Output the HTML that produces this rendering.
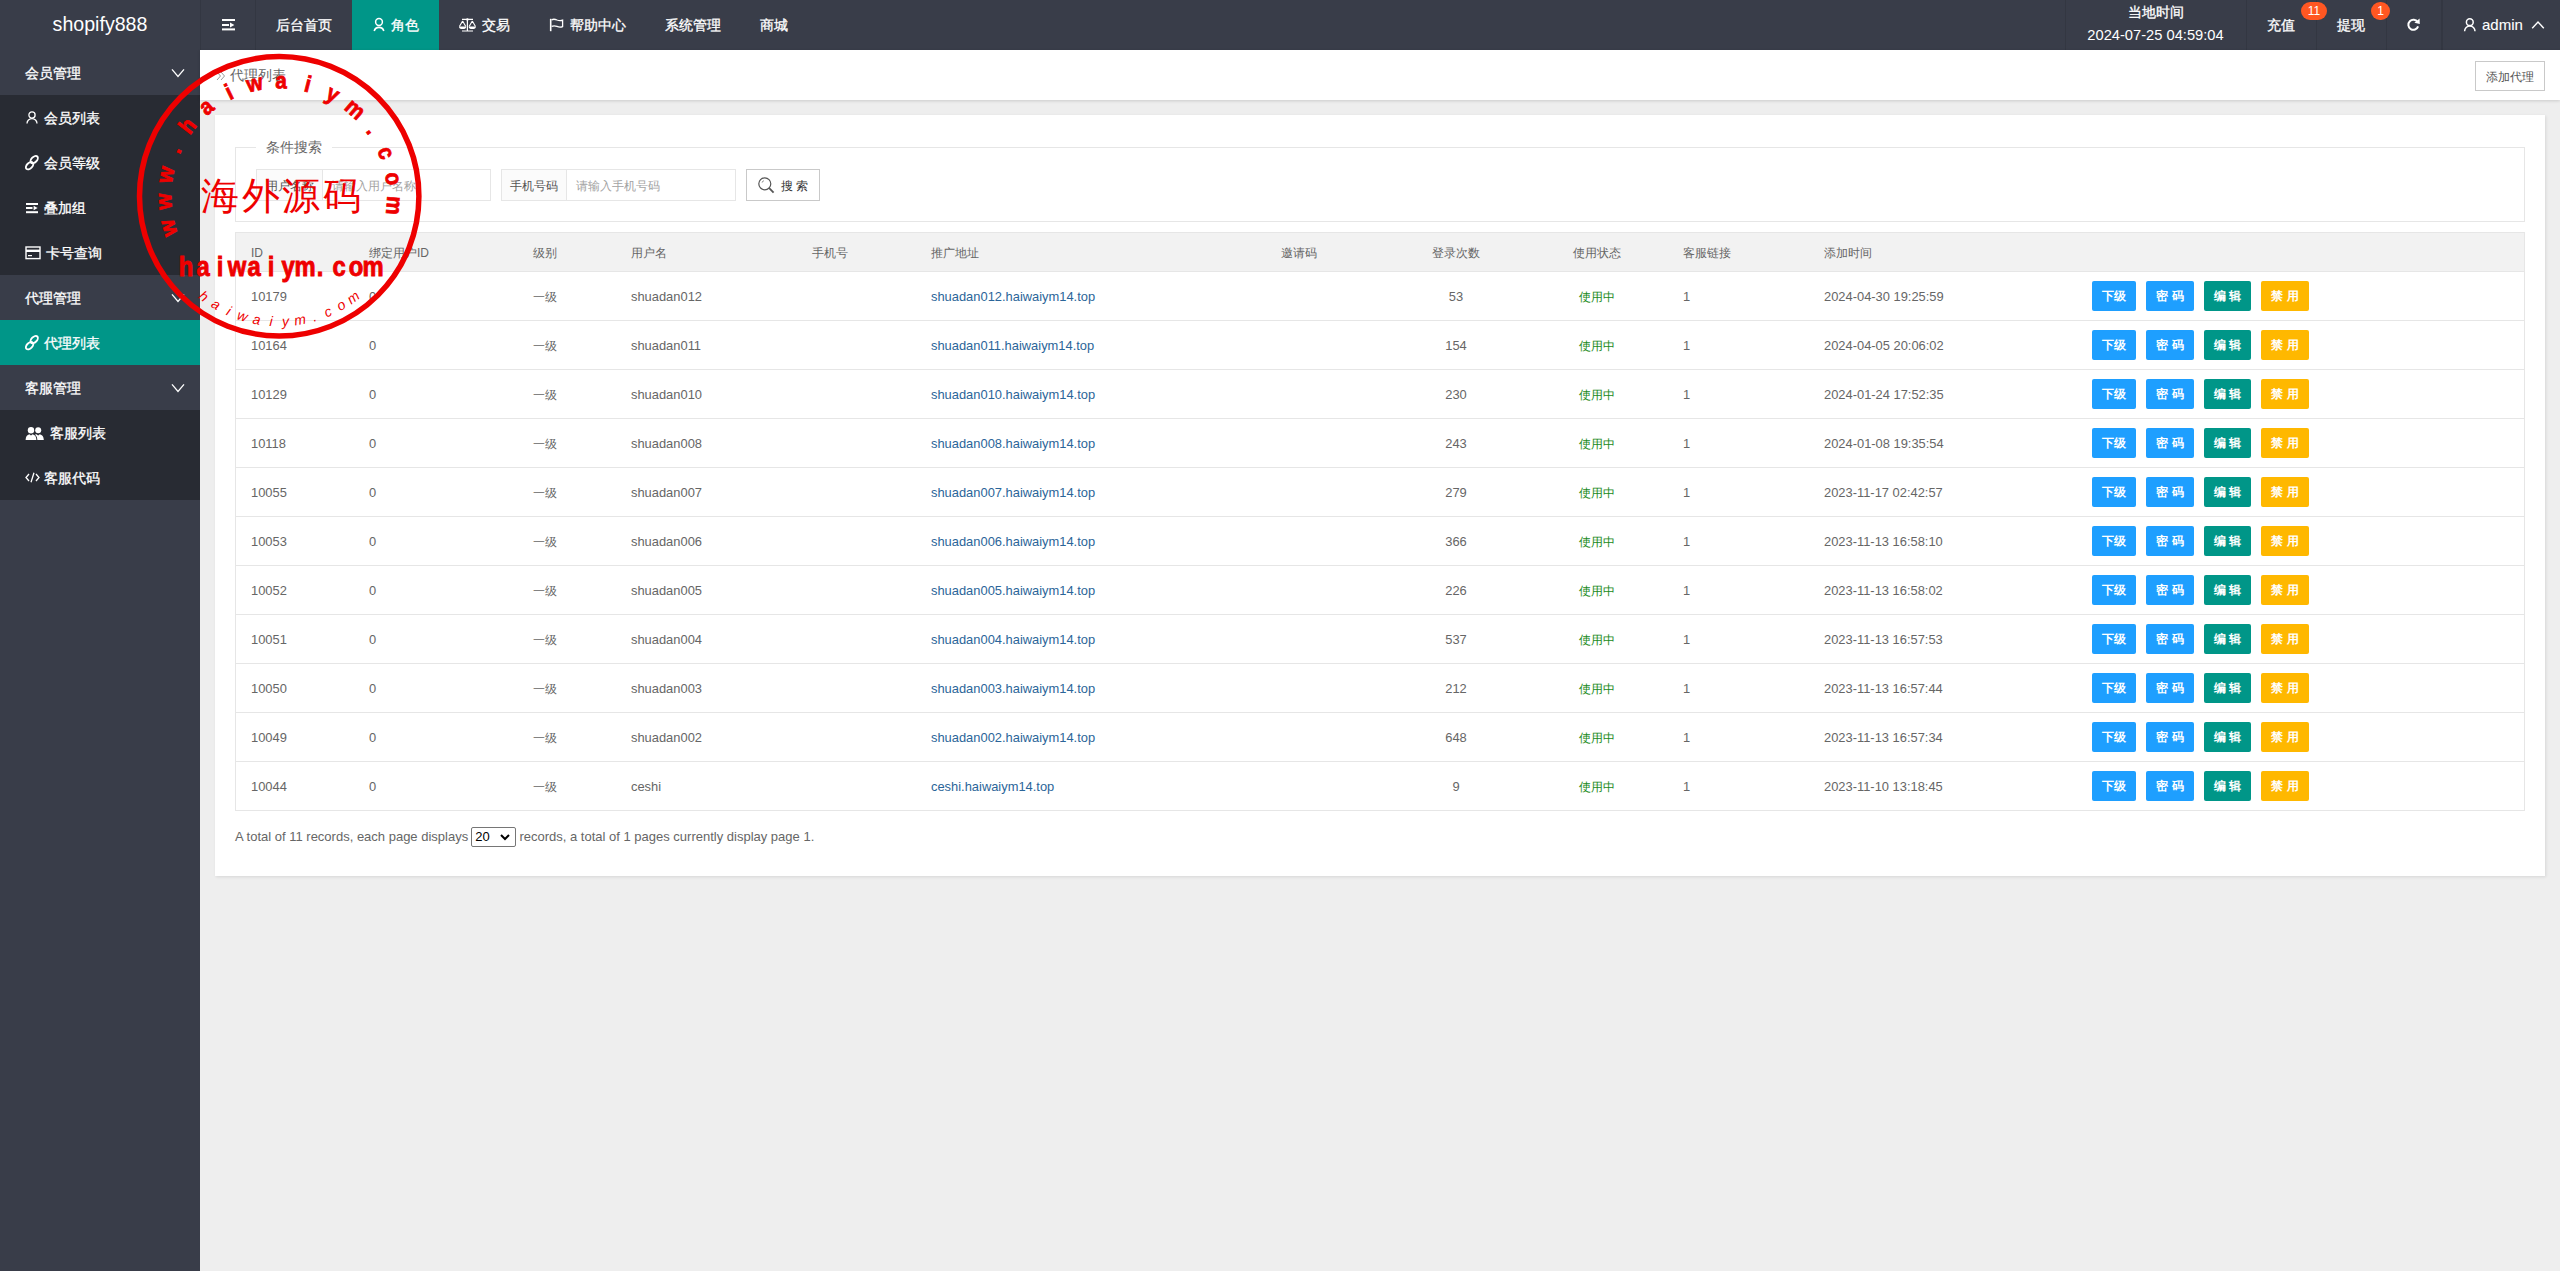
<!DOCTYPE html>
<html><head><meta charset="utf-8">
<style>
*{margin:0;padding:0;box-sizing:border-box}
html,body{width:2560px;height:1271px;overflow:hidden}
body{font-family:"Liberation Sans",sans-serif;background:#eeeeee;position:relative;color:#666}
.abs{position:absolute;white-space:nowrap}
#hdr{position:absolute;left:0;top:0;width:2560px;height:50px;background:#393D49}
#logo{position:absolute;left:0;top:0;width:200px;height:50px;line-height:48px;text-align:center;color:#fff;font-size:19.6px}
.nv{position:absolute;top:0;height:50px;line-height:50px;color:#fff;font-size:14px;white-space:nowrap;-webkit-text-stroke:0.3px #fff}
.sep{position:absolute;top:0;width:1px;height:50px;background:#333742}
.ic{position:absolute;overflow:visible}
#side{position:absolute;left:0;top:50px;width:200px;height:1221px;background:#393D49}
.si{position:absolute;left:0;width:200px;height:45px;line-height:47px;color:#fff;font-size:14px;white-space:nowrap;-webkit-text-stroke:0.3px #fff}
.si.g{background:#393D49}
.si.c{background:#282B33}
.si.a{background:#009688}
.si svg{position:absolute}
#crumb{position:absolute;left:200px;top:50px;width:2360px;height:50px;background:#fff;box-shadow:0 1px 3px rgba(0,0,0,.15)}
#card{position:absolute;left:215px;top:115px;width:2330px;height:761px;background:#fff;box-shadow:1px 1px 3px rgba(0,0,0,.10)}
.fs{position:absolute;left:235px;top:147px;width:2290px;height:75px;border:1px solid #e6e6e6}
.legend{position:absolute;left:256px;top:138px;height:18px;padding:0 10px;background:#fff;font-size:14px;line-height:18px;color:#666}
.lbl{position:absolute;top:169px;height:32px;line-height:32px;border:1px solid #e6e6e6;background:#FBFBFB;font-size:12px;color:#555;text-align:center}
.inp{position:absolute;top:169px;height:32px;line-height:32px;border:1px solid #e6e6e6;background:#fff;font-size:12px;color:#a3a3a3;padding-left:9px}
.sbtn{position:absolute;top:169px;left:746px;width:74px;height:32px;border:1px solid #C9C9C9;background:#fff;font-size:12px;color:#333;line-height:30px}
.thd{position:absolute;left:235px;top:232px;width:2290px;height:40px;background:#f2f2f2;border:1px solid #e6e6e6;border-bottom:1px solid #e6e6e6}
.th{position:absolute;top:244px;font-size:12px;line-height:18px;color:#666;white-space:nowrap}
.tbody{position:absolute;left:235px;top:271px;width:2290px;height:540px;border:1px solid #e6e6e6;border-top:none}
.tr{position:absolute;left:0;width:2560px;height:49px}
.tr::after{content:"";position:absolute;left:236px;top:48px;width:2288px;height:1px;background:#e6e6e6}
.td{position:absolute;top:16px;line-height:18px;white-space:nowrap;color:#666}
.lt{font-size:12.9px}
.cj{font-size:12px}
.lk{color:#2b6599}
.ct{width:100px;text-align:center}
.st{width:100px;text-align:center;color:#1a8a1a}
.bt{position:absolute;top:9px;height:30px;line-height:30px;border-radius:2px;color:#fff;font-size:12px;font-weight:bold;text-align:center;white-space:nowrap}
.b1{background:#1E9FFF}.b2{background:#009688}.b3{background:#FFB800}
.foot{position:absolute;left:235px;top:829px;font-size:13px;line-height:16px;color:#666;white-space:nowrap}
.sel{display:inline-block;vertical-align:top;position:relative;top:-2px;width:45px;height:20px;border:1px solid #767676;border-radius:2px;color:#000;font-size:13px;line-height:18px;padding-left:3px;margin:0 -0.5px}
.badge{position:absolute;z-index:2;top:2px;height:18px;line-height:18px;border-radius:9px;background:#FF5722;color:#fff;font-size:12px;text-align:center}
</style></head><body>
<div id="hdr">
  <div id="logo">shopify888</div>
  <div class="sep" style="left:200px"></div>
  <div class="sep" style="left:255px"></div>
  <svg class="ic" style="left:221px;top:18px" width="15" height="14" viewBox="0 0 15 14">
    <rect x="1" y="1" width="13" height="2" fill="#fff"/>
    <rect x="1" y="6" width="7" height="2" fill="#fff"/>
    <path d="M9 4.6 L13.4 7 L9 9.4 Z" fill="#fff"/>
    <rect x="1" y="10.4" width="13" height="2" fill="#fff"/>
  </svg>
  <div class="nv" style="left:276px">后台首页</div>
  <div class="nv" style="left:352px;width:87px;background:#009688"></div>
  <svg class="ic" style="left:372px;top:16px" width="14" height="16" viewBox="0 0 14 16">
    <circle cx="7" cy="6" r="3.4" fill="none" stroke="#fff" stroke-width="1.5"/>
    <path d="M2.2 15 A5 5 0 0 1 11.8 15" fill="none" stroke="#fff" stroke-width="1.6"/>
  </svg>
  <div class="nv" style="left:391px">角色</div>
  <svg class="ic" style="left:458px;top:18px" width="19" height="14" viewBox="0 0 19 14">
    <path d="M4 1.4 H15 M9.4 1.4 V13 M4 13 H15" stroke="#fff" stroke-width="1.2" fill="none"/>
    <circle cx="9.4" cy="1.4" r="1.2" fill="#fff"/>
    <path d="M4.6 3 L1.4 8.6 M4.6 3 L7.8 8.6 M14.3 3 L11.1 8.6 M14.3 3 L17.5 8.6" stroke="#fff" stroke-width="1.1" fill="none"/>
    <path d="M1 8.4 H8.2 A3.6 2.7 0 0 1 1 8.4 Z M10.7 8.4 H17.9 A3.6 2.7 0 0 1 10.7 8.4 Z" fill="#fff"/>
  </svg>
  <div class="nv" style="left:482px">交易</div>
  <svg class="ic" style="left:549px;top:18px" width="16" height="14" viewBox="0 0 16 14">
    <path d="M1.7 0.8 V13.2" stroke="#fff" stroke-width="1.6"/>
    <path d="M2.6 1.8 Q5 0.6 8 2 Q11 3.2 13.6 2.2 V8.6 Q11 9.6 8 8.4 Q5 7.2 2.6 8.4" fill="none" stroke="#fff" stroke-width="1.3"/>
  </svg>
  <div class="nv" style="left:570px">帮助中心</div>
  <div class="nv" style="left:665px">系统管理</div>
  <div class="nv" style="left:760px">商城</div>

  <div class="sep" style="left:2065px"></div>
  <div class="nv" style="left:2065px;width:181px;text-align:center;line-height:18px;top:3px;font-size:14px">当地时间</div>
  <div class="nv" style="left:2065px;width:181px;text-align:center;line-height:18px;top:26px;font-size:14.7px;-webkit-text-stroke:0">2024-07-25 04:59:04</div>
  <div class="sep" style="left:2246px"></div>
  <div class="nv" style="left:2267px">充值</div>
  <div class="badge" style="left:2301px;width:26px">11</div>
  <div class="sep" style="left:2316px"></div>
  <div class="nv" style="left:2337px">提现</div>
  <div class="badge" style="left:2371px;width:19px">1</div>
  <div class="sep" style="left:2386px"></div>
  <svg class="ic" style="left:2406px;top:18px" width="15" height="14" viewBox="0 0 15 14">
    <path d="M11.6 4.2 A5 5 0 1 0 12.1 8.4" fill="none" stroke="#fff" stroke-width="2"/>
    <path d="M8.4 4.8 L13.6 0.6 L13.8 6 Z" fill="#fff"/>
  </svg>
  <div class="sep" style="left:2441px;width:2px"></div>
  <svg class="ic" style="left:2463px;top:17px" width="14" height="15" viewBox="0 0 14 15">
    <circle cx="6.8" cy="5.2" r="3.4" fill="none" stroke="#fff" stroke-width="1.5"/>
    <path d="M1.6 14.2 A5.2 5.2 0 0 1 12 14.2" fill="none" stroke="#fff" stroke-width="1.5"/>
  </svg>
  <div class="nv" style="left:2482px;font-size:15px;-webkit-text-stroke:0.1px #fff">admin</div>
  <svg class="ic" style="left:2531px;top:20px" width="14" height="10" viewBox="0 0 14 10">
    <path d="M1.2 8.2 L7 2 L12.8 8.2" fill="none" stroke="#fff" stroke-width="1.4"/>
  </svg>
</div>

<div id="side">
  <div class="si g" style="top:0;padding-left:25px">会员管理
    <svg style="left:171px;top:18px" width="14" height="10" viewBox="0 0 14 10"><path d="M1 1.4 L7 8.4 L13 1.4" fill="none" stroke="#fff" stroke-width="1.3"/></svg></div>
  <div class="si c" style="top:45px;padding-left:44px">会员列表
    <svg style="left:26px;top:16px" width="12" height="13" viewBox="0 0 12 13"><circle cx="6" cy="4" r="3.1" fill="none" stroke="#fff" stroke-width="1.3"/><path d="M1 12.6 A5 5 0 0 1 11 12.6" fill="none" stroke="#fff" stroke-width="1.3"/></svg></div>
  <div class="si c" style="top:90px;padding-left:44px">会员等级
    <svg style="left:25px;top:14px" width="16" height="18" viewBox="0 0 16 18"><g fill="none" stroke="#fff" stroke-width="1.9"><ellipse cx="9.2" cy="5.6" rx="4.4" ry="2.7" transform="rotate(-45 9.2 5.6)"/><ellipse cx="4.6" cy="11.7" rx="4.4" ry="2.7" transform="rotate(-45 4.6 11.7)"/></g></svg></div>
  <div class="si c" style="top:135px;padding-left:44px">叠加组
    <svg style="left:25px;top:17px" width="14" height="12" viewBox="0 0 14 12"><rect x="1" y="1" width="12" height="2" fill="#fff"/><rect x="1" y="5" width="6.5" height="2" fill="#fff"/><path d="M8.6 3.8 L12.6 6 L8.6 8.2Z" fill="#fff"/><rect x="1" y="9.2" width="12" height="2" fill="#fff"/></svg></div>
  <div class="si c" style="top:180px;padding-left:46px">卡号查询
    <svg style="left:25px;top:16px" width="16" height="14" viewBox="0 0 16 14"><rect x="1" y="1" width="14" height="11.6" fill="none" stroke="#fff" stroke-width="1.4"/><rect x="1" y="3.6" width="14" height="2.4" fill="#fff"/><rect x="3" y="9" width="4" height="1.2" fill="#fff"/></svg></div>
  <div class="si g" style="top:225px;padding-left:25px">代理管理
    <svg style="left:171px;top:18px" width="14" height="10" viewBox="0 0 14 10"><path d="M1 1.4 L7 8.4 L13 1.4" fill="none" stroke="#fff" stroke-width="1.3"/></svg></div>
  <div class="si a" style="top:270px;padding-left:44px">代理列表
    <svg style="left:25px;top:14px" width="16" height="18" viewBox="0 0 16 18"><g fill="none" stroke="#fff" stroke-width="1.9"><ellipse cx="9.2" cy="5.6" rx="4.4" ry="2.7" transform="rotate(-45 9.2 5.6)"/><ellipse cx="4.6" cy="11.7" rx="4.4" ry="2.7" transform="rotate(-45 4.6 11.7)"/></g></svg></div>
  <div class="si g" style="top:315px;padding-left:25px">客服管理
    <svg style="left:171px;top:18px" width="14" height="10" viewBox="0 0 14 10"><path d="M1 1.4 L7 8.4 L13 1.4" fill="none" stroke="#fff" stroke-width="1.3"/></svg></div>
  <div class="si c" style="top:360px;padding-left:50px">客服列表
    <svg style="left:25px;top:16px" width="20" height="15" viewBox="0 0 20 15"><g fill="#fff"><circle cx="6" cy="4.2" r="3.2"/><path d="M0.6 14 Q0.8 9 4.4 8.2 L6 9.6 L7.6 8.2 Q11.2 9 11.4 14 Z"/><circle cx="13.2" cy="4.2" r="3" /><path d="M10 8.6 L11.4 8.2 L13.2 9.6 L14.8 8.2 Q18.6 9 18.8 14 H12.4 Q12.2 10.4 10 8.6Z"/></g></svg></div>
  <div class="si c" style="top:405px;padding-left:44px">客服代码
    <svg style="left:25px;top:17px" width="15" height="11" viewBox="0 0 15 11"><path d="M4 2 L1 5.5 L4 9 M11 2 L14 5.5 L11 9 M9 0.8 L6 10.2" fill="none" stroke="#fff" stroke-width="1.3"/></svg></div>
</div>

<div id="crumb">
  <svg style="position:absolute;left:16px;top:21px" width="10" height="10" viewBox="0 0 10 10"><path d="M1 1 L4.5 5 L1 9 M5 1 L8.5 5 L5 9" fill="none" stroke="#999" stroke-width="1"/></svg>
  <div class="abs" style="left:30px;top:16px;font-size:14px;line-height:18px;color:#666">代理列表</div>
  <div class="abs" style="left:2275px;top:11px;width:70px;height:30px;border:1px solid #C9C9C9;background:#fff;font-size:12px;line-height:30px;text-align:center;color:#555">添加代理</div>
</div>

<div id="card"></div>
<div class="fs"></div>
<div class="legend">条件搜索</div>
<div class="lbl" style="left:256px;width:67px">用户名称</div>
<div class="inp" style="left:322px;width:169px">请输入用户名称</div>
<div class="lbl" style="left:501px;width:66px">手机号码</div>
<div class="inp" style="left:566px;width:170px">请输入手机号码</div>
<div class="sbtn">
  <svg style="position:absolute;left:11px;top:7px" width="17" height="17" viewBox="0 0 17 17"><circle cx="6.8" cy="6.8" r="6" fill="none" stroke="#555" stroke-width="1.2"/><path d="M11.2 11.2 L15.6 15.6" stroke="#555" stroke-width="1.8"/><path d="M4.2 5.4 A3 3 0 0 1 5.6 3.8" fill="none" stroke="#555" stroke-width="0.9"/></svg>
  <span style="position:absolute;left:34px;top:1px">搜&nbsp;索</span>
</div>

<div class="thd"></div>
<div class="tbody"></div>
<span class="th" style="left:251px">ID</span>
<span class="th" style="left:369px">绑定用户ID</span>
<span class="th" style="left:533px">级别</span>
<span class="th" style="left:631px">用户名</span>
<span class="th" style="left:812px">手机号</span>
<span class="th" style="left:931px">推广地址</span>
<span class="th" style="left:1281px">邀请码</span>
<span class="th" style="left:1432px">登录次数</span>
<span class="th" style="left:1573px">使用状态</span>
<span class="th" style="left:1683px">客服链接</span>
<span class="th" style="left:1824px">添加时间</span>
<div class="tr" style="top:272px"><span class="td lt" style="left:251px">10179</span><span class="td lt" style="left:369px">0</span><span class="td cj" style="left:533px">一级</span><span class="td lt" style="left:631px">shuadan012</span><span class="td lt lk" style="left:931px">shuadan012.haiwaiym14.top</span><span class="td lt ct" style="left:1406px">53</span><span class="td cj st" style="left:1547px">使用中</span><span class="td lt" style="left:1683px">1</span><span class="td lt" style="left:1824px">2024-04-30 19:25:59</span><span class="bt b1" style="left:2092px;width:44px">下级</span><span class="bt b1" style="left:2146px;width:48px">密&nbsp;码</span><span class="bt b2" style="left:2204px;width:47px">编&nbsp;辑</span><span class="bt b3" style="left:2261px;width:48px">禁&nbsp;用</span></div>
<div class="tr" style="top:321px"><span class="td lt" style="left:251px">10164</span><span class="td lt" style="left:369px">0</span><span class="td cj" style="left:533px">一级</span><span class="td lt" style="left:631px">shuadan011</span><span class="td lt lk" style="left:931px">shuadan011.haiwaiym14.top</span><span class="td lt ct" style="left:1406px">154</span><span class="td cj st" style="left:1547px">使用中</span><span class="td lt" style="left:1683px">1</span><span class="td lt" style="left:1824px">2024-04-05 20:06:02</span><span class="bt b1" style="left:2092px;width:44px">下级</span><span class="bt b1" style="left:2146px;width:48px">密&nbsp;码</span><span class="bt b2" style="left:2204px;width:47px">编&nbsp;辑</span><span class="bt b3" style="left:2261px;width:48px">禁&nbsp;用</span></div>
<div class="tr" style="top:370px"><span class="td lt" style="left:251px">10129</span><span class="td lt" style="left:369px">0</span><span class="td cj" style="left:533px">一级</span><span class="td lt" style="left:631px">shuadan010</span><span class="td lt lk" style="left:931px">shuadan010.haiwaiym14.top</span><span class="td lt ct" style="left:1406px">230</span><span class="td cj st" style="left:1547px">使用中</span><span class="td lt" style="left:1683px">1</span><span class="td lt" style="left:1824px">2024-01-24 17:52:35</span><span class="bt b1" style="left:2092px;width:44px">下级</span><span class="bt b1" style="left:2146px;width:48px">密&nbsp;码</span><span class="bt b2" style="left:2204px;width:47px">编&nbsp;辑</span><span class="bt b3" style="left:2261px;width:48px">禁&nbsp;用</span></div>
<div class="tr" style="top:419px"><span class="td lt" style="left:251px">10118</span><span class="td lt" style="left:369px">0</span><span class="td cj" style="left:533px">一级</span><span class="td lt" style="left:631px">shuadan008</span><span class="td lt lk" style="left:931px">shuadan008.haiwaiym14.top</span><span class="td lt ct" style="left:1406px">243</span><span class="td cj st" style="left:1547px">使用中</span><span class="td lt" style="left:1683px">1</span><span class="td lt" style="left:1824px">2024-01-08 19:35:54</span><span class="bt b1" style="left:2092px;width:44px">下级</span><span class="bt b1" style="left:2146px;width:48px">密&nbsp;码</span><span class="bt b2" style="left:2204px;width:47px">编&nbsp;辑</span><span class="bt b3" style="left:2261px;width:48px">禁&nbsp;用</span></div>
<div class="tr" style="top:468px"><span class="td lt" style="left:251px">10055</span><span class="td lt" style="left:369px">0</span><span class="td cj" style="left:533px">一级</span><span class="td lt" style="left:631px">shuadan007</span><span class="td lt lk" style="left:931px">shuadan007.haiwaiym14.top</span><span class="td lt ct" style="left:1406px">279</span><span class="td cj st" style="left:1547px">使用中</span><span class="td lt" style="left:1683px">1</span><span class="td lt" style="left:1824px">2023-11-17 02:42:57</span><span class="bt b1" style="left:2092px;width:44px">下级</span><span class="bt b1" style="left:2146px;width:48px">密&nbsp;码</span><span class="bt b2" style="left:2204px;width:47px">编&nbsp;辑</span><span class="bt b3" style="left:2261px;width:48px">禁&nbsp;用</span></div>
<div class="tr" style="top:517px"><span class="td lt" style="left:251px">10053</span><span class="td lt" style="left:369px">0</span><span class="td cj" style="left:533px">一级</span><span class="td lt" style="left:631px">shuadan006</span><span class="td lt lk" style="left:931px">shuadan006.haiwaiym14.top</span><span class="td lt ct" style="left:1406px">366</span><span class="td cj st" style="left:1547px">使用中</span><span class="td lt" style="left:1683px">1</span><span class="td lt" style="left:1824px">2023-11-13 16:58:10</span><span class="bt b1" style="left:2092px;width:44px">下级</span><span class="bt b1" style="left:2146px;width:48px">密&nbsp;码</span><span class="bt b2" style="left:2204px;width:47px">编&nbsp;辑</span><span class="bt b3" style="left:2261px;width:48px">禁&nbsp;用</span></div>
<div class="tr" style="top:566px"><span class="td lt" style="left:251px">10052</span><span class="td lt" style="left:369px">0</span><span class="td cj" style="left:533px">一级</span><span class="td lt" style="left:631px">shuadan005</span><span class="td lt lk" style="left:931px">shuadan005.haiwaiym14.top</span><span class="td lt ct" style="left:1406px">226</span><span class="td cj st" style="left:1547px">使用中</span><span class="td lt" style="left:1683px">1</span><span class="td lt" style="left:1824px">2023-11-13 16:58:02</span><span class="bt b1" style="left:2092px;width:44px">下级</span><span class="bt b1" style="left:2146px;width:48px">密&nbsp;码</span><span class="bt b2" style="left:2204px;width:47px">编&nbsp;辑</span><span class="bt b3" style="left:2261px;width:48px">禁&nbsp;用</span></div>
<div class="tr" style="top:615px"><span class="td lt" style="left:251px">10051</span><span class="td lt" style="left:369px">0</span><span class="td cj" style="left:533px">一级</span><span class="td lt" style="left:631px">shuadan004</span><span class="td lt lk" style="left:931px">shuadan004.haiwaiym14.top</span><span class="td lt ct" style="left:1406px">537</span><span class="td cj st" style="left:1547px">使用中</span><span class="td lt" style="left:1683px">1</span><span class="td lt" style="left:1824px">2023-11-13 16:57:53</span><span class="bt b1" style="left:2092px;width:44px">下级</span><span class="bt b1" style="left:2146px;width:48px">密&nbsp;码</span><span class="bt b2" style="left:2204px;width:47px">编&nbsp;辑</span><span class="bt b3" style="left:2261px;width:48px">禁&nbsp;用</span></div>
<div class="tr" style="top:664px"><span class="td lt" style="left:251px">10050</span><span class="td lt" style="left:369px">0</span><span class="td cj" style="left:533px">一级</span><span class="td lt" style="left:631px">shuadan003</span><span class="td lt lk" style="left:931px">shuadan003.haiwaiym14.top</span><span class="td lt ct" style="left:1406px">212</span><span class="td cj st" style="left:1547px">使用中</span><span class="td lt" style="left:1683px">1</span><span class="td lt" style="left:1824px">2023-11-13 16:57:44</span><span class="bt b1" style="left:2092px;width:44px">下级</span><span class="bt b1" style="left:2146px;width:48px">密&nbsp;码</span><span class="bt b2" style="left:2204px;width:47px">编&nbsp;辑</span><span class="bt b3" style="left:2261px;width:48px">禁&nbsp;用</span></div>
<div class="tr" style="top:713px"><span class="td lt" style="left:251px">10049</span><span class="td lt" style="left:369px">0</span><span class="td cj" style="left:533px">一级</span><span class="td lt" style="left:631px">shuadan002</span><span class="td lt lk" style="left:931px">shuadan002.haiwaiym14.top</span><span class="td lt ct" style="left:1406px">648</span><span class="td cj st" style="left:1547px">使用中</span><span class="td lt" style="left:1683px">1</span><span class="td lt" style="left:1824px">2023-11-13 16:57:34</span><span class="bt b1" style="left:2092px;width:44px">下级</span><span class="bt b1" style="left:2146px;width:48px">密&nbsp;码</span><span class="bt b2" style="left:2204px;width:47px">编&nbsp;辑</span><span class="bt b3" style="left:2261px;width:48px">禁&nbsp;用</span></div>
<div class="tr" style="top:762px"><span class="td lt" style="left:251px">10044</span><span class="td lt" style="left:369px">0</span><span class="td cj" style="left:533px">一级</span><span class="td lt" style="left:631px">ceshi</span><span class="td lt lk" style="left:931px">ceshi.haiwaiym14.top</span><span class="td lt ct" style="left:1406px">9</span><span class="td cj st" style="left:1547px">使用中</span><span class="td lt" style="left:1683px">1</span><span class="td lt" style="left:1824px">2023-11-10 13:18:45</span><span class="bt b1" style="left:2092px;width:44px">下级</span><span class="bt b1" style="left:2146px;width:48px">密&nbsp;码</span><span class="bt b2" style="left:2204px;width:47px">编&nbsp;辑</span><span class="bt b3" style="left:2261px;width:48px">禁&nbsp;用</span></div>
<div class="foot">A total of 11 records, each page displays <span class="sel">20<svg style="position:absolute;right:5px;top:6px" width="10" height="7" viewBox="0 0 10 7"><path d="M1 1 L5 5 L9 1" fill="none" stroke="#000" stroke-width="2"/></svg></span> records, a total of 1 pages currently display page 1.</div>

<svg style="position:absolute;left:0;top:0" width="600" height="400" viewBox="0 0 600 400">
<circle cx="279.2" cy="196.3" r="139.7" fill="none" stroke="#ee0000" stroke-width="5.5"/>
<text transform="translate(175.38,226.07) rotate(254.00) scale(0.9,1)" text-anchor="middle" font-family="Liberation Sans" font-weight="bold" font-size="23" fill="#ee0000" stroke="#ee0000" stroke-width="0.8">w</text>
<text transform="translate(171.31,201.26) rotate(267.37) scale(0.9,1)" text-anchor="middle" font-family="Liberation Sans" font-weight="bold" font-size="23" fill="#ee0000" stroke="#ee0000" stroke-width="0.8">w</text>
<text transform="translate(173.09,176.17) rotate(280.74) scale(0.9,1)" text-anchor="middle" font-family="Liberation Sans" font-weight="bold" font-size="23" fill="#ee0000" stroke="#ee0000" stroke-width="0.8">w</text>
<text transform="translate(180.62,152.18) rotate(294.11) scale(0.9,1)" text-anchor="middle" font-family="Liberation Sans" font-weight="bold" font-size="23" fill="#ee0000" stroke="#ee0000" stroke-width="0.8">.</text>
<text transform="translate(193.49,130.58) rotate(307.48) scale(0.9,1)" text-anchor="middle" font-family="Liberation Sans" font-weight="bold" font-size="23" fill="#ee0000" stroke="#ee0000" stroke-width="0.8">h</text>
<text transform="translate(211.01,112.55) rotate(320.85) scale(0.9,1)" text-anchor="middle" font-family="Liberation Sans" font-weight="bold" font-size="23" fill="#ee0000" stroke="#ee0000" stroke-width="0.8">a</text>
<text transform="translate(232.23,99.05) rotate(334.22) scale(0.9,1)" text-anchor="middle" font-family="Liberation Sans" font-weight="bold" font-size="23" fill="#ee0000" stroke="#ee0000" stroke-width="0.8">i</text>
<text transform="translate(255.99,90.82) rotate(347.59) scale(0.9,1)" text-anchor="middle" font-family="Liberation Sans" font-weight="bold" font-size="23" fill="#ee0000" stroke="#ee0000" stroke-width="0.8">w</text>
<text transform="translate(281.01,88.32) rotate(360.96) scale(0.9,1)" text-anchor="middle" font-family="Liberation Sans" font-weight="bold" font-size="23" fill="#ee0000" stroke="#ee0000" stroke-width="0.8">a</text>
<text transform="translate(305.93,91.66) rotate(374.33) scale(0.9,1)" text-anchor="middle" font-family="Liberation Sans" font-weight="bold" font-size="23" fill="#ee0000" stroke="#ee0000" stroke-width="0.8">i</text>
<text transform="translate(329.40,100.68) rotate(387.70) scale(0.9,1)" text-anchor="middle" font-family="Liberation Sans" font-weight="bold" font-size="23" fill="#ee0000" stroke="#ee0000" stroke-width="0.8">y</text>
<text transform="translate(350.15,114.88) rotate(401.07) scale(0.9,1)" text-anchor="middle" font-family="Liberation Sans" font-weight="bold" font-size="23" fill="#ee0000" stroke="#ee0000" stroke-width="0.8">m</text>
<text transform="translate(367.06,133.49) rotate(414.44) scale(0.9,1)" text-anchor="middle" font-family="Liberation Sans" font-weight="bold" font-size="23" fill="#ee0000" stroke="#ee0000" stroke-width="0.8">.</text>
<text transform="translate(379.20,155.51) rotate(427.81) scale(0.9,1)" text-anchor="middle" font-family="Liberation Sans" font-weight="bold" font-size="23" fill="#ee0000" stroke="#ee0000" stroke-width="0.8">c</text>
<text transform="translate(385.92,179.74) rotate(441.18) scale(0.9,1)" text-anchor="middle" font-family="Liberation Sans" font-weight="bold" font-size="23" fill="#ee0000" stroke="#ee0000" stroke-width="0.8">o</text>
<text transform="translate(386.86,204.87) rotate(454.55) scale(0.9,1)" text-anchor="middle" font-family="Liberation Sans" font-weight="bold" font-size="23" fill="#ee0000" stroke="#ee0000" stroke-width="0.8">m</text>
<text transform="translate(200.96,300.12) rotate(37.00)" text-anchor="middle" font-family="Liberation Sans" font-style="italic" font-size="14" fill="#ee0000">h</text>
<text transform="translate(213.52,308.49) rotate(30.35)" text-anchor="middle" font-family="Liberation Sans" font-style="italic" font-size="14" fill="#ee0000">a</text>
<text transform="translate(226.97,315.34) rotate(23.69)" text-anchor="middle" font-family="Liberation Sans" font-style="italic" font-size="14" fill="#ee0000">i</text>
<text transform="translate(241.11,320.60) rotate(17.04)" text-anchor="middle" font-family="Liberation Sans" font-style="italic" font-size="14" fill="#ee0000">w</text>
<text transform="translate(255.77,324.17) rotate(10.38)" text-anchor="middle" font-family="Liberation Sans" font-style="italic" font-size="14" fill="#ee0000">a</text>
<text transform="translate(270.75,326.03) rotate(3.73)" text-anchor="middle" font-family="Liberation Sans" font-style="italic" font-size="14" fill="#ee0000">i</text>
<text transform="translate(285.84,326.13) rotate(-2.93)" text-anchor="middle" font-family="Liberation Sans" font-style="italic" font-size="14" fill="#ee0000">y</text>
<text transform="translate(300.84,324.49) rotate(-9.58)" text-anchor="middle" font-family="Liberation Sans" font-style="italic" font-size="14" fill="#ee0000">m</text>
<text transform="translate(315.55,321.12) rotate(-16.24)" text-anchor="middle" font-family="Liberation Sans" font-style="italic" font-size="14" fill="#ee0000">.</text>
<text transform="translate(329.77,316.06) rotate(-22.89)" text-anchor="middle" font-family="Liberation Sans" font-style="italic" font-size="14" fill="#ee0000">c</text>
<text transform="translate(343.30,309.40) rotate(-29.55)" text-anchor="middle" font-family="Liberation Sans" font-style="italic" font-size="14" fill="#ee0000">o</text>
<text transform="translate(355.98,301.20) rotate(-36.20)" text-anchor="middle" font-family="Liberation Sans" font-style="italic" font-size="14" fill="#ee0000">m</text>
<text x="201" y="209" font-family="Liberation Sans" font-size="38" fill="#ee0000" textLength="160" lengthAdjust="spacing">海外源码</text>
<text transform="translate(186,276) scale(0.88,1)" text-anchor="middle" font-family="Liberation Sans" font-weight="bold" font-size="27" fill="#ee0000" stroke="#ee0000" stroke-width="0.9">h</text>
<text transform="translate(203,276) scale(0.88,1)" text-anchor="middle" font-family="Liberation Sans" font-weight="bold" font-size="27" fill="#ee0000" stroke="#ee0000" stroke-width="0.9">a</text>
<text transform="translate(220,276) scale(0.88,1)" text-anchor="middle" font-family="Liberation Sans" font-weight="bold" font-size="27" fill="#ee0000" stroke="#ee0000" stroke-width="0.9">i</text>
<text transform="translate(237,276) scale(0.88,1)" text-anchor="middle" font-family="Liberation Sans" font-weight="bold" font-size="27" fill="#ee0000" stroke="#ee0000" stroke-width="0.9">w</text>
<text transform="translate(254,276) scale(0.88,1)" text-anchor="middle" font-family="Liberation Sans" font-weight="bold" font-size="27" fill="#ee0000" stroke="#ee0000" stroke-width="0.9">a</text>
<text transform="translate(271,276) scale(0.88,1)" text-anchor="middle" font-family="Liberation Sans" font-weight="bold" font-size="27" fill="#ee0000" stroke="#ee0000" stroke-width="0.9">i</text>
<text transform="translate(288,276) scale(0.88,1)" text-anchor="middle" font-family="Liberation Sans" font-weight="bold" font-size="27" fill="#ee0000" stroke="#ee0000" stroke-width="0.9">y</text>
<text transform="translate(305,276) scale(0.88,1)" text-anchor="middle" font-family="Liberation Sans" font-weight="bold" font-size="27" fill="#ee0000" stroke="#ee0000" stroke-width="0.9">m</text>
<text transform="translate(320,276) scale(0.88,1)" text-anchor="middle" font-family="Liberation Sans" font-weight="bold" font-size="27" fill="#ee0000" stroke="#ee0000" stroke-width="0.9">.</text>
<text transform="translate(339,276) scale(0.88,1)" text-anchor="middle" font-family="Liberation Sans" font-weight="bold" font-size="27" fill="#ee0000" stroke="#ee0000" stroke-width="0.9">c</text>
<text transform="translate(356,276) scale(0.88,1)" text-anchor="middle" font-family="Liberation Sans" font-weight="bold" font-size="27" fill="#ee0000" stroke="#ee0000" stroke-width="0.9">o</text>
<text transform="translate(373,276) scale(0.88,1)" text-anchor="middle" font-family="Liberation Sans" font-weight="bold" font-size="27" fill="#ee0000" stroke="#ee0000" stroke-width="0.9">m</text>
</svg>
</body></html>
